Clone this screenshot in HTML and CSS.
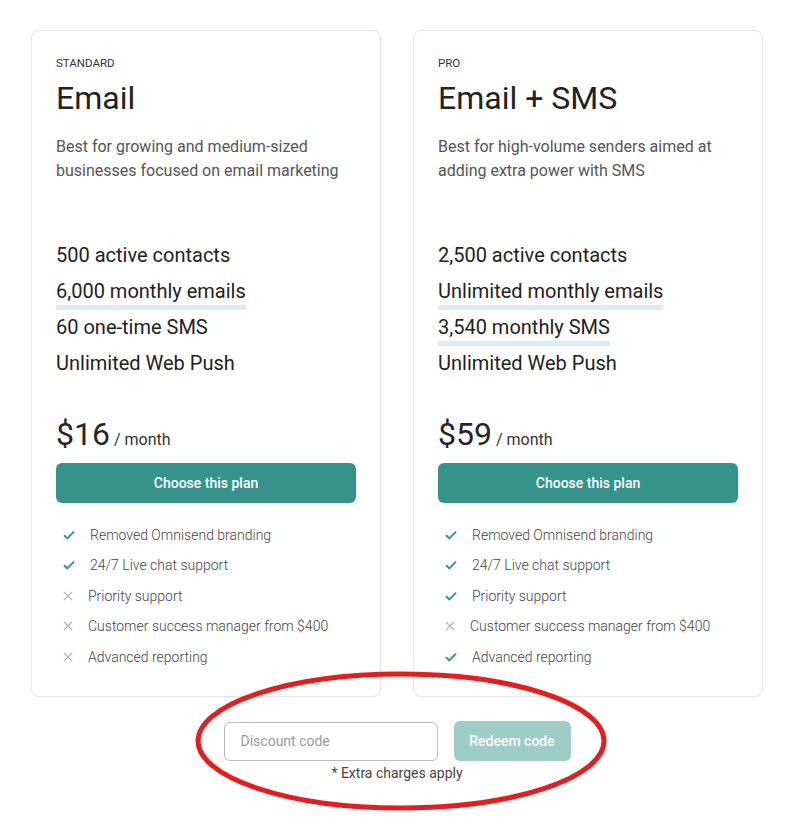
FILE: index.html
```html
<!DOCTYPE html>
<html lang="en">
    <head>
        <meta charset="UTF-8">
        <meta name="viewport" content="width=device-width, initial-scale=1.0">
        <title>Pricing</title>
        <link rel="stylesheet" href="styles.css">
    </head>
    <body>
        <div class="page">
            <div class="plans">
                <div class="card">
                    <div class="tier">STANDARD</div>
                    <h2 class="plan-name">Email</h2>
                    <p class="plan-desc">Best for growing and medium-sized businesses focused on email marketing</p>
                    <ul class="limits">
                        <li>500 active contacts</li>
                        <li><span class="mark">6,000 monthly emails</span></li>
                        <li>60 one-time SMS</li>
                        <li>Unlimited Web Push</li>
                    </ul>
                    <div class="price"><span class="amount">$16</span><span class="per"> / month</span></div>
                    <button class="choose">Choose this plan</button>
                    <ul class="perks">
                        <li class="yes"><span class="icon"><svg width="12" height="10" viewBox="0 0 12 10"><path d="M1 5.2 L4.3 8.4 L11 1.6" fill="none" stroke="#3a9484" stroke-width="2"/></svg></span>Removed Omnisend branding</li>
                        <li class="yes"><span class="icon"><svg width="12" height="10" viewBox="0 0 12 10"><path d="M1 5.2 L4.3 8.4 L11 1.6" fill="none" stroke="#3a9484" stroke-width="2"/></svg></span>24/7 Live chat support</li>
                        <li class="no"><span class="icon"><svg width="10" height="10" viewBox="0 0 10 10"><path d="M1 1 L9 9 M9 1 L1 9" fill="none" stroke="#b5b5b5" stroke-width="1.2"/></svg></span>Priority support</li>
                        <li class="no"><span class="icon"><svg width="10" height="10" viewBox="0 0 10 10"><path d="M1 1 L9 9 M9 1 L1 9" fill="none" stroke="#b5b5b5" stroke-width="1.2"/></svg></span>Customer success manager from $400</li>
                        <li class="no"><span class="icon"><svg width="10" height="10" viewBox="0 0 10 10"><path d="M1 1 L9 9 M9 1 L1 9" fill="none" stroke="#b5b5b5" stroke-width="1.2"/></svg></span>Advanced reporting</li>
                    </ul>
                </div>

                <div class="card">
                    <div class="tier">PRO</div>
                    <h2 class="plan-name">Email + SMS</h2>
                    <p class="plan-desc">Best for high-volume senders aimed at adding extra power with SMS</p>
                    <ul class="limits">
                        <li>2,500 active contacts</li>
                        <li><span class="mark">Unlimited monthly emails</span></li>
                        <li><span class="mark">3,540 monthly SMS</span></li>
                        <li>Unlimited Web Push</li>
                    </ul>
                    <div class="price"><span class="amount">$59</span><span class="per"> / month</span></div>
                    <button class="choose">Choose this plan</button>
                    <ul class="perks">
                        <li class="yes"><span class="icon"><svg width="12" height="10" viewBox="0 0 12 10"><path d="M1 5.2 L4.3 8.4 L11 1.6" fill="none" stroke="#3a9484" stroke-width="2"/></svg></span>Removed Omnisend branding</li>
                        <li class="yes"><span class="icon"><svg width="12" height="10" viewBox="0 0 12 10"><path d="M1 5.2 L4.3 8.4 L11 1.6" fill="none" stroke="#3a9484" stroke-width="2"/></svg></span>24/7 Live chat support</li>
                        <li class="yes"><span class="icon"><svg width="12" height="10" viewBox="0 0 12 10"><path d="M1 5.2 L4.3 8.4 L11 1.6" fill="none" stroke="#3a9484" stroke-width="2"/></svg></span>Priority support</li>
                        <li class="no"><span class="icon"><svg width="10" height="10" viewBox="0 0 10 10"><path d="M1 1 L9 9 M9 1 L1 9" fill="none" stroke="#b5b5b5" stroke-width="1.2"/></svg></span>Customer success manager from $400</li>
                        <li class="yes"><span class="icon"><svg width="12" height="10" viewBox="0 0 12 10"><path d="M1 5.2 L4.3 8.4 L11 1.6" fill="none" stroke="#3a9484" stroke-width="2"/></svg></span>Advanced reporting</li>
                    </ul>
                </div>
            </div>

            <div class="discount">
                <div class="discount-row">
                    <input class="code" type="text" placeholder="Discount code">
                    <button class="redeem">Redeem code</button>
                </div>
                <p class="note">* Extra charges apply</p>
                <svg class="circle" width="420" height="148" viewBox="0 0 420 148">
                    <ellipse cx="207" cy="70" rx="203" ry="67" fill="none" stroke="#e21f1f" stroke-width="5"/>
                </svg>
            </div>
        </div>
    </body>
</html>
```

FILE: styles.css
```css
body {
    margin: 0;
    padding: 0;
    background-color: #fff;
    font-family: Roboto, "Noto Sans", Arial, sans-serif;
    color: #222;
}

.page {
    width: 732px;
    margin-left: 31px;
    padding-top: 30px;
    padding-bottom: 40px;
}

.plans {
    display: grid;
    grid-template-columns: 350px 350px;
    gap: 32px;
}

.card {
    border: 1px solid #e6e6e6;
    border-radius: 8px;
    padding: 24px;
}

.tier {
    font-size: 11.5px;
    line-height: 16px;
    color: #333;
}

.plan-name {
    margin: 7px 0 0 0;
    font-size: 32px;
    line-height: 40px;
    font-weight: 400;
    color: #222;
}

.plan-desc {
    margin: 16.5px 0 0 0;
    font-size: 16px;
    line-height: 24px;
    color: #555;
}

.limits {
    list-style: none;
    margin: 54px 0 0 0;
    padding: 0;
}

.limits li {
    font-size: 20px;
    line-height: 36px;
    font-weight: 400;
    color: #222;
}

.mark {
    padding-bottom: 7px;
    background-image: linear-gradient(#dcebfa, #dcebfa);
    background-repeat: no-repeat;
    background-size: 100% 5px;
    background-position: left bottom;
}

.price {
    margin-top: 33.5px;
    font-size: 32px;
    line-height: 40px;
    color: #262626;
}

.per {
    font-size: 16px;
    line-height: 16px;
    color: #333;
}

.choose {
    display: block;
    width: 100%;
    height: 40px;
    margin-top: 9px;
    border: none;
    border-radius: 6px;
    background-color: #35938a;
    color: #fff;
    font-family: Roboto, Arial, sans-serif;
    font-size: 14px;
    font-weight: 500;
    cursor: pointer;
}

.perks {
    list-style: none;
    margin: 16.5px 0 0 0;
    padding: 0 0 0 7px;
}

.perks li {
    display: flex;
    align-items: center;
    font-size: 14px;
    line-height: 30.5px;
    font-weight: 300;
    color: #444;
}

.icon {
    display: flex;
    align-items: center;
    width: 27px;
    flex-shrink: 0;
}

.perks li.no .icon {
    width: 25px;
}

.discount {
    position: relative;
    margin-top: 24px;
    text-align: center;
}

.discount-row {
    display: flex;
    justify-content: center;
    align-items: center;
    gap: 16px;
}

.code {
    width: 214px;
    height: 39px;
    box-sizing: border-box;
    padding: 0 16px;
    border: 1px solid #b9b9b9;
    border-radius: 6px;
    font-family: Roboto, Arial, sans-serif;
    font-size: 14px;
    color: #333;
}

.code::placeholder {
    color: #9a9a9a;
}

.redeem {
    width: 117px;
    height: 40px;
    border: none;
    border-radius: 6px;
    background-color: #9dcdc6;
    color: #fff;
    font-family: Roboto, Arial, sans-serif;
    font-size: 14px;
    font-weight: 500;
}

.note {
    margin: 2px 0 0 0;
    font-size: 14px;
    line-height: 20px;
    color: #444;
}

.circle {
    position: absolute;
    left: 163px;
    top: -50px;
    pointer-events: none;
}
```
